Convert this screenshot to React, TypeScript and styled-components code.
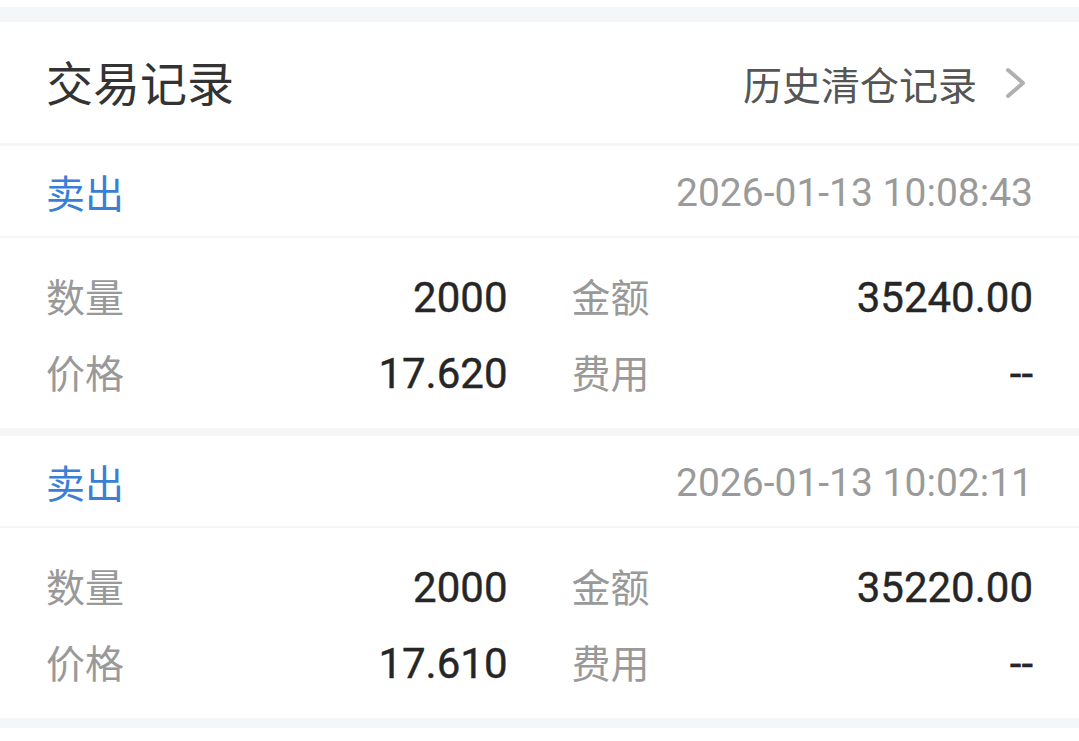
import React from "react";
import styled, { createGlobalStyle } from "styled-components";

const GlobalStyle = createGlobalStyle`
  html, body {
    margin: 0;
    padding: 0;
    background: #ffffff;
  }
  body {
    font-family: Roboto, "Noto Sans CJK SC", sans-serif;
  }
`;

const Page = styled.div`
  width: 1079px;
  display: flex;
  flex-direction: column;
  background: #ffffff;
`;

const Band = styled.div<{ $h: number; $top?: number }>`
  height: ${(p) => p.$h}px;
  margin-top: ${(p) => p.$top ?? 0}px;
  background: #f5f6f8;
`;

const Header = styled.div`
  height: 121px;
  display: flex;
  align-items: center;
  justify-content: space-between;
  padding: 0 52px 0 46px;
`;

const Title = styled.div`
  font-family: "Noto Sans CJK SC", sans-serif;
  font-size: 47px;
  color: #333333;
  margin-top: -4px;
`;

const Link = styled.div`
  display: flex;
  align-items: center;
  gap: 28px;
  font-family: "Noto Sans CJK SC", sans-serif;
  font-size: 39px;
  color: #555555;
  margin-top: 0px;
`;

const Card = styled.div`
  display: flex;
  flex-direction: column;
`;

const TypeRow = styled.div`
  height: 90px;
  display: flex;
  align-items: center;
  justify-content: space-between;
  padding: 0 46px;
  border-bottom: 2px solid #f6f6f6;
`;

const TypeLabel = styled.div`
  font-family: "Noto Sans CJK SC", sans-serif;
  font-size: 39px;
  color: #3a7fd5;
  margin-top: 0px;
`;

const DateText = styled.div`
  font-family: Roboto, sans-serif;
  font-size: 39px;
  color: #9a9a9a;
  margin-top: 4px;
`;

const Details = styled.div`
  display: grid;
  grid-template-columns: 1fr 1fr;
  column-gap: 64px;
  padding: 21px 46px 17px;
`;

const Cell = styled.div`
  height: 76px;
  display: flex;
  align-items: center;
  justify-content: space-between;
`;

const Label = styled.div`
  font-family: "Noto Sans CJK SC", sans-serif;
  font-size: 39px;
  color: #999999;
  margin-top: -5px;
`;

const Value = styled.div`
  font-family: Roboto, sans-serif;
  font-size: 42px;
  font-weight: 400;
  color: #262626;
  -webkit-text-stroke: 0.4px #262626;
`;

const Chevron = () => (
  <svg width="22" height="32" viewBox="0 0 22 32" fill="none">
    <polyline
      points="3,3 18,16 3,29"
      stroke="#b0b0b0"
      strokeWidth="4"
      strokeLinecap="round"
      strokeLinejoin="round"
    />
  </svg>
);

type Trade = {
  side: string;
  time: string;
  qty: string;
  amount: string;
  price: string;
  fee: string;
};

const trades: Trade[] = [
  { side: "卖出", time: "2026-01-13 10:08:43", qty: "2000", amount: "35240.00", price: "17.620", fee: "--" },
  { side: "卖出", time: "2026-01-13 10:02:11", qty: "2000", amount: "35220.00", price: "17.610", fee: "--" },
];

export default function App() {
  return (
    <Page>
      <GlobalStyle />
      <Band $h={15} $top={7} />
      <Header>
        <Title>交易记录</Title>
        <Link>
          历史清仓记录
          <Chevron />
        </Link>
      </Header>
      <Band $h={3} />
      {trades.map((t, i) => (
        <React.Fragment key={t.time}>
          {i > 0 && <Band $h={8} />}
          <Card>
            <TypeRow>
              <TypeLabel>{t.side}</TypeLabel>
              <DateText>{t.time}</DateText>
            </TypeRow>
            <Details>
              <Cell>
                <Label>数量</Label>
                <Value>{t.qty}</Value>
              </Cell>
              <Cell>
                <Label>金额</Label>
                <Value>{t.amount}</Value>
              </Cell>
              <Cell>
                <Label>价格</Label>
                <Value>{t.price}</Value>
              </Cell>
              <Cell>
                <Label>费用</Label>
                <Value>{t.fee}</Value>
              </Cell>
            </Details>
          </Card>
        </React.Fragment>
      ))}
      <Band $h={10} />
    </Page>
  );
}
